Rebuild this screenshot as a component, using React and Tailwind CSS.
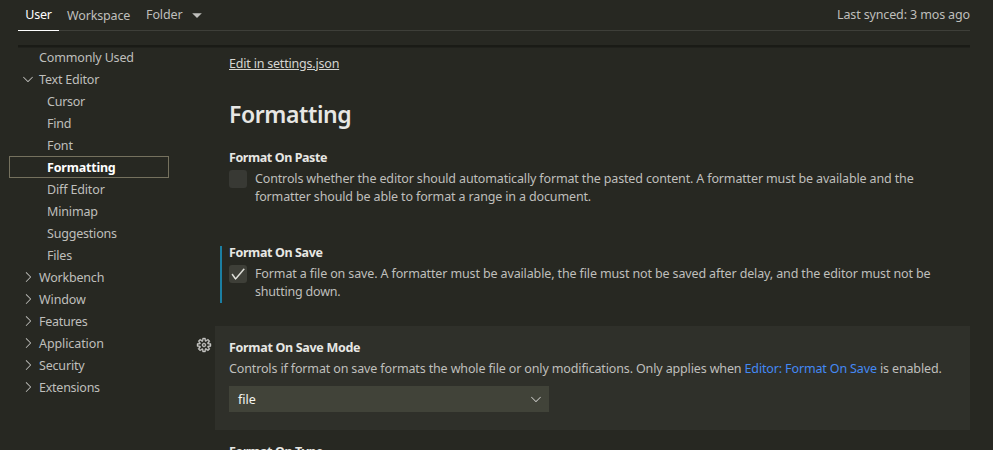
import {
  VscCheck,
  VscChevronDown,
  VscChevronRight,
  VscGear,
} from "react-icons/vsc";

const tree = [
  { label: "Commonly Used", level: 0, track: "tracking-[-0.15px]" },
  { label: "Text Editor", level: 0, icon: "down", track: "tracking-[-0.2px]" },
  { label: "Cursor", level: 1, track: "tracking-[-0.25px]" },
  { label: "Find", level: 1, track: "tracking-[-0.2px]" },
  { label: "Font", level: 1, track: "tracking-[-0.1px]" },
  { label: "Formatting", level: 1, selected: true, track: "tracking-[-0.2px]" },
  { label: "Diff Editor", level: 1, track: "tracking-[-0.15px]" },
  { label: "Minimap", level: 1, track: "tracking-[-0.15px]" },
  { label: "Suggestions", level: 1, track: "tracking-[-0.2px]" },
  { label: "Files", level: 1, track: "tracking-[-0.2px]" },
  { label: "Workbench", level: 0, icon: "right", track: "tracking-[-0.2px]" },
  { label: "Window", level: 0, icon: "right", track: "tracking-[-0.1px]" },
  { label: "Features", level: 0, icon: "right", track: "tracking-[-0.28px]" },
  { label: "Application", level: 0, icon: "right", track: "tracking-[-0.1px]" },
  { label: "Security", level: 0, icon: "right", track: "tracking-[-0.18px]" },
  { label: "Extensions", level: 0, icon: "right", track: "tracking-[-0.25px]" },
];

function TreeRow({ label, level, icon, selected, track }) {
  return (
    <div
      className={`flex h-[22px] items-center border ${
        selected ? "border-[#75715e] font-bold text-white" : "border-transparent"
      } ${level === 0 ? "pl-[10px]" : "pl-[18px]"}`}
    >
      <span className="flex w-[19px] shrink-0">
        {icon === "down" && <VscChevronDown className="size-4" />}
        {icon === "right" && <VscChevronRight className="size-4" />}
      </span>
      <span className={`pt-[2px] ${track}`}>{label}</span>
    </div>
  );
}

function Checkbox({ checked }) {
  return (
    <span
      className={`flex size-[18px] shrink-0 items-center justify-center rounded-[3px] text-[#f0f0eb] ${
        checked ? "bg-[#3e3f38]" : "bg-[#383934]"
      }`}
    >
      {checked && <VscCheck className="size-4" stroke="currentColor" strokeWidth="0.5" />}
    </span>
  );
}

function Title({ children, track = "tracking-[-0.38px]" }) {
  return (
    <h3 className={`h-[18px] pt-px text-[12.5px] font-bold text-[#e7e7e4] ${track}`}>{children}</h3>
  );
}

export default function App() {
  return (
    <div className="h-[450px] w-[993px] overflow-hidden bg-[#272822] font-['Noto_Sans',sans-serif] text-[12.5px] leading-[18px] whitespace-nowrap text-[#bfbfbc]">
      <header className="mr-[23px] ml-[18px] flex h-[31px] border-b border-[#3e3f39]">
        <div className="flex h-[31px] w-[41px] justify-center border-b border-white pt-[6px] text-white">
          <span className="tracking-[-0.2px]">User</span>
        </div>
        <div className="ml-[8px] w-[79px] pt-[7px]">
          <span className="tracking-[-0.15px]">Workspace</span>
        </div>
        <div className="flex pt-[6px]">
          <span className="w-[43px] tracking-[-0.1px]">Folder</span>
          <svg className="mt-[2px] size-4" viewBox="0 0 16 16" fill="currentColor">
            <path d="M3.2 5.3h9.6L8 10z" />
          </svg>
        </div>
        <div className="ml-auto pt-[6px] tracking-[-0.13px]">Last synced: 3 mos ago</div>
      </header>
      <div className="mt-[14px] mr-[23px] ml-[18px] h-[2px] bg-[#1a1b16] shadow-[0_1px_0_#20211c]" />

      <div className="-mt-px flex">
        <nav className="ml-[9px] w-[160px]">
          {tree.map((row) => (
            <TreeRow key={row.label} {...row} />
          ))}
        </nav>

        <main className="ml-[46px] w-[755px]">
          <div className="h-[90px] pl-[14px]">
            <a className="block pt-[9px] text-[#d5d5d1] underline underline-offset-1">
              <span className="tracking-[-0.2px]">Edit in settings.json</span>
            </a>
            <h2 className="mt-[25px] text-[23px] leading-[32px] font-semibold tracking-[-0.4px] text-[#e7e7e4]">
              Formatting
            </h2>
          </div>

          <section className="h-[95px] pt-[12px] pl-[14px]">
            <Title track="tracking-[-0.42px]">Format On Paste</Title>
            <div className="mt-1 flex gap-2">
              <Checkbox />
              <p>
                <span className="block tracking-[-0.145px]">Controls whether the editor should automatically format the pasted content. A formatter must be available and the</span>
                <span className="block tracking-[-0.14px]">formatter should be able to format a range in a document.</span>
              </p>
            </div>
          </section>

          <section className="h-[95px] pt-[12px]">
            <div className="flex">
              <div className="mt-[3px] ml-[5px] h-[57px] w-[2px] bg-[#1b7fa3]" />
              <div className="ml-[7px]">
                <Title>Format On Save</Title>
                <div className="mt-1 flex gap-2">
                  <Checkbox checked />
                  <p>
                    <span className="block tracking-[-0.13px]">Format a file on save. A formatter must be available, the file must not be saved after delay, and the editor must not be</span>
                    <span className="block tracking-[-0.2px]">shutting down.</span>
                  </p>
                </div>
              </div>
            </div>
          </section>

          <section className="relative h-[104px] bg-[#2f302a] pt-[12px] pl-[14px]">
            <VscGear
              className="absolute top-[11px] -left-[19px] size-4 text-[#c5c5c2]"
              stroke="currentColor"
              strokeWidth="0.4"
            />
            <Title track="tracking-[-0.31px]">Format On Save Mode</Title>
            <p className="mt-[4px] tracking-[-0.14px]">
              Controls if format on save formats the whole file or only modifications. Only applies when{" "}
              <a className="text-[#4489f4]">Editor: Format On Save</a> is enabled.
            </p>
            <div className="mt-[8px] flex h-[26px] w-[320px] items-center justify-between bg-[#414339] pr-[5px] pl-[9px] text-[#f5f5f0]">
              <span className="pt-px">file</span>
              <VscChevronDown className="size-4 text-[#c5c5c2]" />
            </div>
          </section>

          <section className="pt-[12px] pl-[14px]">
            <Title>Format On Type</Title>
          </section>
        </main>
      </div>
    </div>
  );
}
